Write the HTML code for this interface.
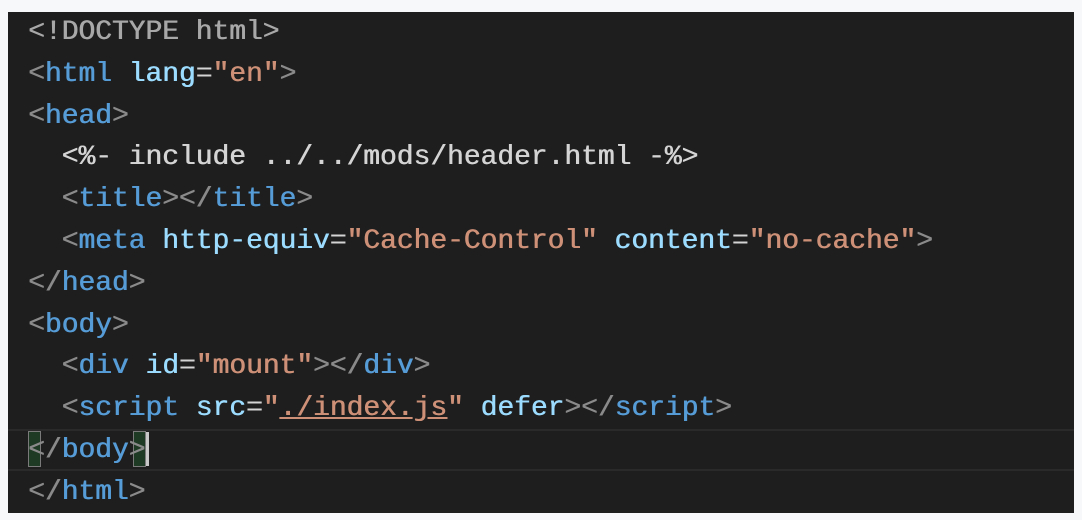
<!DOCTYPE html>
<html><head><style>
body{margin:0;background:#f7f8fa;width:1082px;height:520px;overflow:hidden;position:relative}
#ed{position:absolute;left:8px;top:12px;width:1066px;height:501px;background:#1e1e1e;overflow:hidden}
#code{position:absolute;left:20px;top:0px;font:28px/41.8px "Liberation Mono",monospace;color:#d4d4d4;white-space:pre;letter-spacing:-0.05px;text-shadow:0.6px 0 0 currentColor}
.p{color:#8a8a8a}.t{color:#569cd6}.a{color:#9cdcfe}.s{color:#ce9178}.d{color:#a8a8a8}
#hl{position:absolute;left:0;right:0;top:417px;height:38px;border-top:2px solid #2a2a2a;border-bottom:2px solid #2a2a2a}
.br{position:absolute;top:419px;width:13px;height:36px;background:#1f3a24;border:1px solid #7a7a7a;box-sizing:border-box}
#cur{position:absolute;left:138px;top:420px;width:3px;height:34px;background:#c8c8c8}
</style></head><body><div id="ed">
<div id="hl"></div>
<div class="br" style="left:20px"></div>
<div class="br" style="left:125px"></div>
<div id="cur"></div>
<div id="code"><span class="d">&lt;!DOCTYPE html&gt;</span>
<span class="p">&lt;</span><span class="t">html</span> <span class="a">lang</span>=<span class="s">"en"</span><span class="p">&gt;</span>
<span class="p">&lt;</span><span class="t">head</span><span class="p">&gt;</span>
  &lt;%- include ../../mods/header.html -%&gt;
  <span class="p">&lt;</span><span class="t">title</span><span class="p">&gt;&lt;/</span><span class="t">title</span><span class="p">&gt;</span>
  <span class="p">&lt;</span><span class="t">meta</span> <span class="a">http-equiv</span>=<span class="s">"Cache-Control"</span> <span class="a">content</span>=<span class="s">"no-cache"</span><span class="p">&gt;</span>
<span class="p">&lt;/</span><span class="t">head</span><span class="p">&gt;</span>
<span class="p">&lt;</span><span class="t">body</span><span class="p">&gt;</span>
  <span class="p">&lt;</span><span class="t">div</span> <span class="a">id</span>=<span class="s">"mount"</span><span class="p">&gt;&lt;/</span><span class="t">div</span><span class="p">&gt;</span>
  <span class="p">&lt;</span><span class="t">script</span> <span class="a">src</span>=<span class="s">"<u>./index.js</u>"</span> <span class="a">defer</span><span class="p">&gt;&lt;/</span><span class="t">script</span><span class="p">&gt;</span>
<span class="p">&lt;/</span><span class="t">body</span><span class="p">&gt;</span>
<span class="p">&lt;/</span><span class="t">html</span><span class="p">&gt;</span></div>
</div></body></html>
